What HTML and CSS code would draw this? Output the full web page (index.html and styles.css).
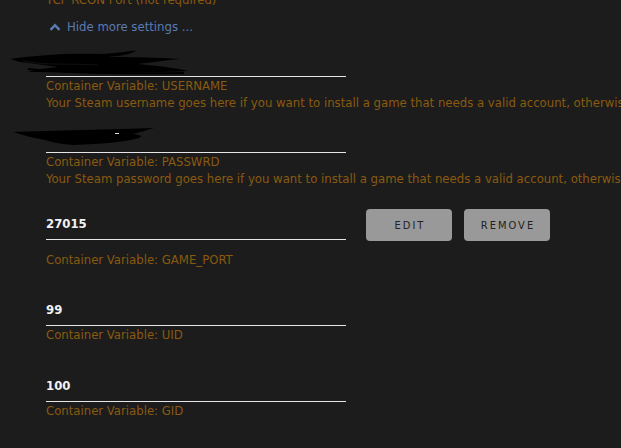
FILE: index.html
```html
<!DOCTYPE html>
<html lang="en">
<head>
    <meta charset="UTF-8">
    <meta name="viewport" content="width=device-width, initial-scale=1.0">
    <title>Template Settings</title>
    <link rel="stylesheet" href="styles.css">
</head>
<body>
    <div class="settings">
        <p class="help top-help">TCP RCON Port (not required)</p>

        <a class="toggle" href="#">
            <svg class="chevron" width="12" height="8" viewBox="0 0 12 8"><path d="M1.5 6.8 L6 2.2 L10.5 6.8" fill="none" stroke="#5b7bb4" stroke-width="2.4"/></svg>
            Hide more settings ...
        </a>

        <!-- Username -->
        <div class="field first">
            <div class="input-row">
                <div class="input">
                    <svg class="scribble one" width="180" height="28" viewBox="0 0 180 28">
                        <path d="M2 10 C30 6 60 4 95 5 C115 4 125 1 128 2 C120 6 110 7 100 8 C130 8 160 9 172 10 C150 12 140 14 130 15 C150 17 170 19 180 22 C140 24 90 24 20 23 C28 20 40 19 50 18 C35 16 22 14 12 13 Z" fill="#000"/>
                        <path d="M20 20 C60 24 110 25 176 24" fill="none" stroke="#000" stroke-width="2"/>
                        <path d="M15 12 C40 17 60 14 90 16" fill="none" stroke="#111" stroke-width="1"/>
                    </svg>
                </div>
            </div>
            <p class="help">Container Variable: USERNAME</p>
            <p class="help">Your Steam username goes here if you want to install a game that needs a valid account, otherwise leave it blank</p>
        </div>

        <!-- Password -->
        <div class="field">
            <div class="input-row">
                <div class="input">
                    <svg class="scribble two" width="145" height="18" viewBox="0 0 145 18">
                        <path d="M0 4 C40 3 100 1 141 0 C130 3 125 5 120 6 C128 7 130 8 126 10 C110 14 90 16 60 17 C45 16 40 14 32 12 C20 10 10 7 0 4 Z" fill="#000"/>
                        <rect x="102" y="5" width="4" height="1" fill="#ddd"/>
                    </svg>
                </div>
            </div>
            <p class="help">Container Variable: PASSWRD</p>
            <p class="help">Your Steam password goes here if you want to install a game that needs a valid account, otherwise leave it blank</p>
        </div>

        <!-- Game port -->
        <div class="field port">
            <div class="input-row">
                <div class="input">27015</div>
                <div class="actions">
                    <button class="btn">EDIT</button>
                    <button class="btn">REMOVE</button>
                </div>
            </div>
            <p class="help spaced">Container Variable: GAME_PORT</p>
        </div>

        <!-- UID -->
        <div class="field">
            <div class="input-row">
                <div class="input">99</div>
            </div>
            <p class="help">Container Variable: UID</p>
        </div>

        <!-- GID -->
        <div class="field">
            <div class="input-row">
                <div class="input">100</div>
            </div>
            <p class="help">Container Variable: GID</p>
        </div>
    </div>
</body>
</html>
```

FILE: styles.css
```css
/* General Body Styling */
body {
    margin: 0;
    background: #1c1c1c;
    font-family: 'DejaVu Sans Condensed', 'DejaVu Sans', sans-serif;
    font-size: 13px;
    color: #f2f2f2;
    overflow: hidden;
}

.settings {
    padding-left: 46px;
    margin-top: -9px;
}

/* Help text under each field */
.help {
    margin: 0;
    color: #8a5a10;
    line-height: 17px;
    white-space: nowrap;
}

.top-help {
    margin-bottom: 11px;
}

.help.spaced {
    margin-top: 9.5px;
}

/* Show / hide toggle */
.toggle {
    display: flex;
    align-items: center;
    gap: 6px;
    height: 16px;
    padding-left: 3px;
    color: #5b7bb4;
    text-decoration: none;
    line-height: 16px;
}

/* Fields */
.field {
    margin-top: 28.5px;
}

.field.first {
    margin-top: 12px;
}

.field.first + .field {
    margin-top: 11.5px;
}

.field.port {
    margin-top: 22.5px;
}

.input-row {
    display: flex;
    align-items: flex-start;
}

.input {
    position: relative;
    width: 300px;
    height: 30px;
    box-sizing: border-box;
    border-bottom: 1px solid #e6e6e6;
    font-weight: bold;
    line-height: 28px;
}

.port .input {
    margin-top: 1px;
}

.scribble {
    position: absolute;
}

.scribble.one {
    left: -38px;
    top: 2px;
}

.scribble.two {
    left: -33px;
    top: 5px;
}

/* Buttons */
.actions {
    display: flex;
    gap: 12px;
    margin-left: 20px;
}

.btn {
    width: 86px;
    height: 32px;
    padding: 0 0 0 2px;
    background: #999;
    color: #222;
    border: none;
    border-radius: 4px;
    font-family: 'DejaVu Sans Condensed', 'DejaVu Sans', sans-serif;
    font-size: 11px;
    letter-spacing: 2px;
    cursor: pointer;
}
```
